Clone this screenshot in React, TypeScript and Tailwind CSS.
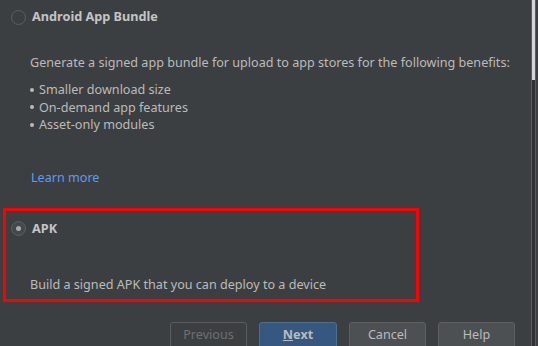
import React from "react";

const font = { fontFamily: '"Noto Sans", "Open Sans", sans-serif' };

export default function App() {
  return (
    <div
      className="w-[538px] h-[346px] bg-[#3c3f41] overflow-hidden flex text-[#bbbbbb] text-[12.6px]"
      style={font}
    >
      <div className="flex-1 flex flex-col">
        <div className="shrink-0 mt-[7px] h-[20px] flex items-center">
          <div className="ml-[11px] w-[15px] h-[15px] rounded-full border border-[#5d5f61] bg-[#3c3f41]" />
          <span className="ml-[6px] font-bold text-[12.7px] text-[#c4c4c4]">Android App Bundle</span>
        </div>
        <div className="shrink-0 mt-[27px] h-[18px] leading-[18px] ml-[30px] whitespace-nowrap">
          Generate a signed app bundle for upload to app stores for the following benefits:
        </div>
        <div className="shrink-0 mt-[9px] ml-[30px] flex flex-col">
          {["Smaller download size", "On-demand app features", "Asset-only modules"].map((t) => (
            <div key={t} className="h-[17.5px] leading-[17.5px] flex items-center">
              <span className="w-[4px] h-[4px] rounded-full bg-[#bbbbbb] mr-[5px]" />
              <span>{t}</span>
            </div>
          ))}
        </div>
        <div className="shrink-0 mt-[35px] h-[18px] leading-[18px] ml-[31px] text-[#589df6]">Learn more</div>
        <div className="shrink-0 mt-[21px] ml-[3px] w-[416px] h-[94px] border-[3px] border-[#ff0000] flex flex-col">
          <div className="shrink-0 mt-[8px] h-[20px] flex items-center">
            <div className="ml-[5px] w-[15px] h-[15px] rounded-full border border-[#5d5f61] bg-[#43494a] flex items-center justify-center">
              <div className="w-[5px] h-[5px] rounded-full bg-[#a9a9a9]" />
            </div>
            <span className="ml-[6px] font-bold text-[12.7px] text-[#c4c4c4]">APK</span>
          </div>
          <div className="shrink-0 mt-[37px] h-[18px] leading-[18px] ml-[24px] whitespace-nowrap">
            Build a signed APK that you can deploy to a device
          </div>
        </div>
        <div className="shrink-0 mt-[20px] flex justify-end pr-[16px] gap-[12px]">
          <div className="shrink-0 w-[77px] h-[28px] rounded-[3px] border border-[#5a5d5f] flex items-center justify-center text-[#6e7072]">
            Previous
          </div>
          <div className="shrink-0 w-[78px] h-[28px] rounded-[3px] border border-[#4c708c] bg-[#365880] flex items-center justify-center font-bold text-[#bbbbbb]">
            <span><span className="underline">N</span>ext</span>
          </div>
          <div className="shrink-0 w-[77px] h-[28px] rounded-[3px] border border-[#5e6060] bg-[#4c5052] flex items-center justify-center">
            Cancel
          </div>
          <div className="shrink-0 w-[77px] h-[28px] rounded-[3px] border border-[#5e6060] bg-[#4c5052] flex items-center justify-center">
            Help
          </div>
        </div>
      </div>
      <div className="shrink-0 w-[7px] h-full flex">
        <div className="w-[1px] bg-[#5b5e60]" />
        <div className="w-[3px] flex flex-col bg-[#2f3133]">
          <div className="h-[80px] bg-[#d6d6d6]" />
        </div>
        <div className="w-[1px] bg-[#5b5e60]" />
        <div className="w-[2px] bg-[#3c3f41]" />
      </div>
    </div>
  );
}
